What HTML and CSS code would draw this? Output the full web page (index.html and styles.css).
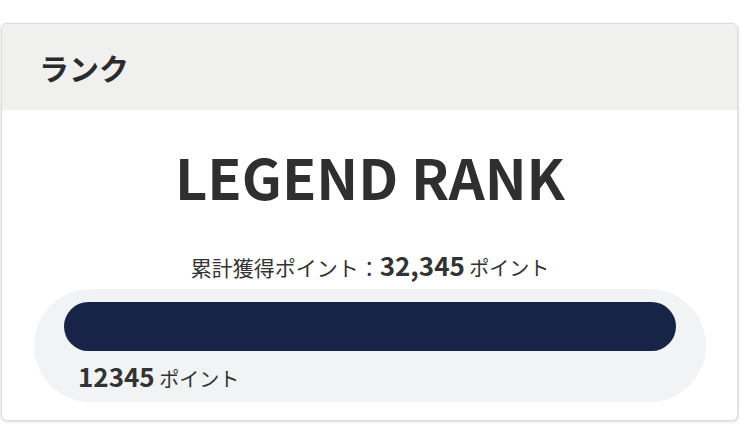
FILE: index.html
```html
<!DOCTYPE html>
<html lang="ja">
<head>
<meta charset="utf-8">
<link rel="stylesheet" href="styles.css">
</head>
<body>
<div class="card">
  <div class="card-header">ランク</div>
  <div class="card-body">
    <div class="rank-name">LEGEND RANK</div>
    <div class="total"><span class="label">累計獲得ポイント：</span><span class="num">32,345</span> ポイント</div>
    <div class="progress">
      <div class="bar"></div>
      <div class="current"><span class="num">12345</span> ポイント</div>
    </div>
  </div>
</div>
</body>
</html>
```
FILE: styles.css
```css
* { box-sizing: border-box; }
html, body { margin: 0; padding: 0; background: #fff; }
body {
  font-family: "Noto Sans CJK JP", "Noto Sans", sans-serif;
  color: #333;
  width: 740px;
  height: 440px;
  overflow: hidden;
}
.card {
  margin: 23px 0 0 1px;
  width: 737px;
  height: 398px;
  border: 1px solid #dcdcdc;
  border-radius: 6px;
  box-shadow: 1px 1px 3px rgba(0,0,0,0.12), -1px 0 2px rgba(0,0,0,0.06);
  overflow: hidden;
  background: #fff;
}
.card-header {
  height: 86px;
  background: #f0f0ef;
  padding-left: 37px;
  display: flex;
  align-items: center;
  font-size: 30px;
  font-weight: 700;
  color: #2b2b2b;
}
.card-body {
  display: flex;
  flex-direction: column;
  align-items: center;
  padding: 26px 31px 0 32px;
}
.rank-name {
  font-size: 56px;
  font-weight: 700;
  line-height: 80px;
  color: #2f2f2f;
}
.total {
  margin-top: 34px;
  font-size: 20px;
  line-height: 30px;
  color: #333;
}
.total .label {
  font-size: 21px;
}
.total .num {
  font-size: 26px;
  font-weight: 700;
}
.progress {
  margin-top: 6px;
  width: 100%;
  height: 113px;
  background: #f1f3f5;
  border-radius: 57px;
  padding: 13px 30px 0 30px;
}
.bar {
  height: 49px;
  background: #172448;
  border-radius: 25px;
}
.current {
  margin-top: 10px;
  padding-left: 14px;
  font-size: 20px;
  line-height: 30px;
}
.current .num {
  font-size: 26px;
  font-weight: 700;
}
```
